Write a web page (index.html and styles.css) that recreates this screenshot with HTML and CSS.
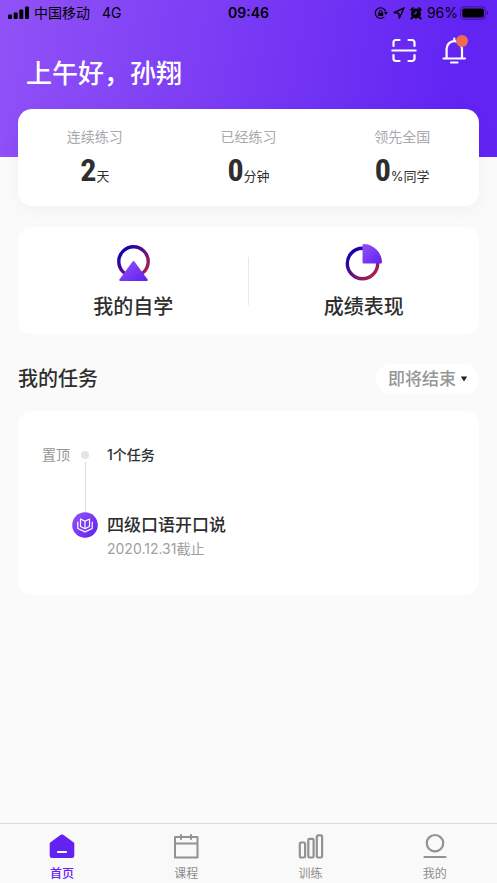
FILE: index.html
```html
<!DOCTYPE html>
<html lang="zh-CN">
<head>
<meta charset="utf-8">
<meta name="viewport" content="width=device-width, initial-scale=1">
<title>首页</title>
<link rel="stylesheet" href="styles.css">
</head>
<body>
<div class="app">
  <header class="hero">
    <div class="status">
      <div class="status-left">
        <svg width="22" height="14" viewBox="0 0 22 14" aria-hidden="true"><rect x="0" y="8.500" width="4" height="4.500" rx="1"/><rect x="5.700" y="6.500" width="4" height="6.500" rx="1"/><rect x="11.300" y="3.500" width="4" height="9.500" rx="1"/><rect x="17" y="0.500" width="4" height="12.500" rx="1"/></svg>
        <span>中国移动</span>
        <span class="network">4G</span>
      </div>
      <span class="time">09:46</span>
      <div class="status-right">
        <svg width="14" height="14" viewBox="0 0 14 14" aria-hidden="true"><path d="M10.300 10.900A5.300 5.300 0 1 1 11.700 5.500" fill="none" stroke="#000" stroke-width="1.200"/><path d="M9.900 6h4L11.900 9z"/><rect x="4.200" y="6.500" width="5" height="3.600" rx=".5"/><path d="M5.300 6.800V5.600a1.400 1.400 0 0 1 2.800 0v1.200" fill="none" stroke="#000"/></svg>
        <svg width="12" height="12" viewBox="0 0 12 12" aria-hidden="true"><path d="M11 1 1 5.600l4.700.7L6.400 11z" fill="none" stroke="#000" stroke-width="1.400" stroke-linejoin="round"/></svg>
        <svg width="12" height="14" viewBox="0 0 12 14" aria-hidden="true"><circle cx="6" cy="7.500" r="5"/><path d="M1.300 3.700 2.900 2.100M10.700 3.700 9.100 2.100M2.500 11.200 1.500 12.400M9.500 11.200l1 1.200" stroke="#000" stroke-width="2" stroke-linecap="round"/><path d="M6 4.800v3H3.800" fill="none" stroke="#7134f3"/></svg>
        <span class="charge">96%<svg width="29" height="14" viewBox="0 0 29 14" aria-hidden="true"><rect x=".6" y=".8" width="25" height="12.400" rx="3.500" fill="none" stroke="#000" stroke-opacity=".4"/><rect x="2.300" y="2.500" width="21.600" height="9" rx="2"/><path d="M27 5c1.600.6 1.600 3.400 0 4z" fill-opacity=".5"/></svg></span>
      </div>
    </div>
    <div class="topbar">
      <h1>上午好，孙翔</h1>
      <div class="actions">
        <button type="button" aria-label="扫一扫"><svg width="26" height="28" viewBox="0 0 26 28" fill="none" stroke="#fff" stroke-width="2.200" stroke-linecap="round"><path d="M2.500 10V6.500a2.500 2.500 0 0 1 2.500-2.500h3.500M17.500 4H21a2.500 2.500 0 0 1 2.500 2.500V10M2.500 19v3.500A2.500 2.500 0 0 0 5 25h3.500M17.500 25H21a2.500 2.500 0 0 0 2.500-2.500V19M1.300 14.500h23.400"/></svg></button>
        <button type="button" aria-label="消息"><svg width="26" height="28" viewBox="0 0 26 28" fill="none" stroke="#fff" stroke-width="2.200" stroke-linecap="round"><path d="M1.500 22.500h21.500M4.600 22V12.800a7.700 7.700 0 0 1 15.400 0V22M12.300 4.800V2.500M9 26.500h6.500"/></svg><span class="badge"></span></button>
      </div>
    </div>
  </header>

  <main>
    <dl class="card stats">
      <div><dt>连续练习</dt><dd><b>2</b>天</dd></div>
      <div><dt>已经练习</dt><dd><b>0</b>分钟</dd></div>
      <div><dt>领先全国</dt><dd><b>0</b>%同学</dd></div>
    </dl>

    <nav class="card shortcuts" aria-label="快捷入口">
      <a href="#study">
        <svg width="38" height="40" viewBox="0 0 38 40" aria-hidden="true">
          <defs>
            <linearGradient id="ring" x1="0" y1="0" x2="1" y2="1"><stop offset=".15" stop-color="#1402b0"/><stop offset=".9" stop-color="#b0204c"/></linearGradient>
            <linearGradient id="violet" x1="0" y1="0" x2="1" y2="1"><stop stop-color="#9354f8"/><stop offset="1" stop-color="#5f20ef"/></linearGradient>
          </defs>
          <circle cx="19.500" cy="18.500" r="14.700" fill="none" stroke="url(#ring)" stroke-width="3.400"/>
          <path d="M18.600 18.500q.9-1.200 1.800 0L33.600 36.500q.7 1.500-1 1.500H6.400q-1.700 0-1-1.500z" fill="url(#violet)"/>
        </svg>
        <span>我的自学</span>
      </a>
      <a href="#scores">
        <svg width="38" height="40" viewBox="0 0 38 40" aria-hidden="true">
          <circle cx="17.500" cy="20.500" r="15.200" fill="none" stroke="url(#ring)" stroke-width="3.400"/>
          <path d="M17.500 2.200q0-1.200 1.200-1.200C29 1.500 36.500 9.500 37 19q0 1.500-1.200 1.500H19q-1.500 0-1.500-1.500z" fill="url(#violet)"/>
        </svg>
        <span>成绩表现</span>
      </a>
    </nav>

    <div class="section-head">
      <h2>我的任务</h2>
      <div class="picker">
        <select aria-label="任务排序"><option>即将结束</option></select>
        <svg width="8" height="6" viewBox="0 0 8 6" aria-hidden="true"><path d="M.8.500h6.400L4 5.500z" fill="#222"/></svg>
      </div>
    </div>

    <section class="card tasks">
      <div class="task-row first">
        <span class="pin">置顶</span>
        <span class="rail"><i class="dot"></i><i class="line"></i></span>
        <h3>1个任务</h3>
      </div>
      <div class="task-row">
        <span></span>
        <svg width="26" height="26" viewBox="0 0 26 26" aria-hidden="true"><circle cx="13" cy="13" r="12.800" fill="url(#violet)"/><path d="M13 9.200 8.500 7v7.500l4.500 2.200 4.500-2.200V7zM13 9.200v7.300M5.800 10v6.500l7.200 3.400 7.200-3.400V10" fill="none" stroke="#fff" stroke-width="1.200" stroke-linejoin="round" stroke-linecap="round"/></svg>
        <a class="task" href="#task"><strong>四级口语开口说</strong><time datetime="2020-12-31">2020.12.31截止</time></a>
      </div>
    </section>
  </main>

  <nav class="tabs" aria-label="主导航">
    <a class="active" href="#home" aria-current="page">
      <svg width="26" height="26" viewBox="0 0 26 26" aria-hidden="true"><path d="M11.800 1.800q1.200-.8 2.400 0l10.300 7.500q.8.600.8 1.700V22.800q0 2.300-2.300 2.300H3q-2.300 0-2.300-2.300V11q0-1.100.8-1.700z" fill="#6322f2"/><path d="M9 19h8" stroke="#fff" stroke-width="2.200" stroke-linecap="round"/></svg>
      <span>首页</span>
    </a>
    <a href="#course">
      <svg width="26" height="26" viewBox="0 0 26 26" fill="none" stroke="#929292" stroke-width="2" stroke-linejoin="round" stroke-linecap="round" aria-hidden="true"><path d="M2 4h22.500V24.500H2zM2 10.500h22.500M8 2v4M18 2v4"/></svg>
      <span>课程</span>
    </a>
    <a href="#train">
      <svg width="26" height="26" viewBox="0 0 26 26" fill="none" stroke="#929292" stroke-width="2.200" aria-hidden="true"><rect x="1.800" y="9.500" width="5.300" height="15" rx="1.300"/><rect x="10.300" y="5.800" width="5.300" height="18.700" rx="1.300"/><rect x="18.800" y="2.300" width="5.300" height="22.200" rx="1.300"/></svg>
      <span>训练</span>
    </a>
    <a href="#me">
      <svg width="26" height="26" viewBox="0 0 26 26" fill="none" stroke="#929292" stroke-width="2.200" stroke-linecap="round" aria-hidden="true"><circle cx="13" cy="10.200" r="8.200"/><path d="M2.500 24h21"/></svg>
      <span>我的</span>
    </a>
  </nav>
</div>
</body>
</html>
```
FILE: styles.css
```css
* { box-sizing: border-box; }

body {
  margin: 0;
  background: #fafafa;
  color: #2e2e2e;
  font-family: Inter, "Noto Sans CJK SC", sans-serif;
  font-size: 14px;
  line-height: 20px;
}

h1, h2, h3, dl, dd { margin: 0; }
a { color: inherit; text-decoration: none; }
svg { display: block; flex: none; }

.app {
  min-height: 100vh;
  display: flex;
  flex-direction: column;
}

.hero {
  padding-bottom: 64px;
  background: linear-gradient(100deg, #9152f7 0%, #7a3bf4 45%, #6224f3 90%);
}

.status {
  display: grid;
  grid-template-columns: 1fr auto 1fr;
  align-items: center;
  height: 26px;
  padding: 0 8px;
  color: #000;
}
.status-left, .status-right, .charge { display: flex; align-items: center; gap: 4px; }
.status-right { justify-content: flex-end; gap: 5px; }
.status-right .charge { gap: 2px; }
.network { margin-left: 8px; }
.time { font-weight: 600; }

.topbar {
  display: flex;
  justify-content: space-between;
  align-items: flex-start;
  padding: 10px 29px 0 26px;
}
.topbar h1 {
  margin-top: 19px;
  color: #fff;
  font-size: 26px;
  line-height: 38px;
  font-weight: 500;
}
.actions { display: flex; gap: 25px; }
.actions button {
  position: relative;
  padding: 0;
  border: 0;
  background: none;
}
.badge {
  position: absolute;
  top: -1px;
  right: 0;
  width: 12px;
  height: 12px;
  border-radius: 50%;
  background: #ee6a50;
}

main { padding: 0 18px 20px; }
.card { border-radius: 14px; background: #fff; }

.stats {
  position: relative;
  display: grid;
  grid-template-columns: repeat(3, 1fr);
  margin-top: -48px;
  padding: 18px 0 13px;
  text-align: center;
  box-shadow: 0 4px 20px rgba(0, 0, 0, .04);
}
.stats dt { color: #a8a8ad; }
.stats dd {
  display: flex;
  justify-content: center;
  align-items: baseline;
  font-size: 13px;
}
.stats b {
  font-family: "Liberation Sans Narrow", "Roboto Condensed", "DejaVu Sans Condensed", sans-serif;
  font-size: 32px;
  line-height: 46px;
}

.shortcuts {
  display: grid;
  grid-template-columns: 1fr 1fr;
  margin-top: 21px;
  padding: 16px 0 12px;
}
.shortcuts a {
  display: flex;
  flex-direction: column;
  align-items: center;
  gap: 9px;
  font-size: 20px;
  line-height: 30px;
  font-weight: 500;
}
.shortcuts a:first-child {
  background: linear-gradient(#e8e8e8, #e8e8e8) right top 14px / 1px 48px no-repeat;
}

.section-head {
  display: flex;
  justify-content: space-between;
  align-items: center;
  margin: 30px 0 17px;
}
.section-head h2 { font-size: 20px; line-height: 30px; font-weight: 500; }

.picker {
  display: flex;
  align-items: center;
  height: 30px;
  padding-right: 11px;
  border-radius: 15px;
  background: #fff;
}
.picker select {
  appearance: none;
  height: 30px;
  margin-right: -8px;
  padding: 0 12px 0 12px;
  border: 0;
  background: none;
  color: #969696;
  font: inherit;
  font-size: 17px;
  font-weight: 500;
}
.picker svg { pointer-events: none; }

.tasks { padding: 34px 24px 35px; }
.task-row {
  display: grid;
  grid-template-columns: 28px 26px 1fr;
  column-gap: 2px;
}
.task-row.first { height: 67px; }
.pin { color: #969696; }
.rail { display: flex; flex-direction: column; align-items: center; }
.dot { width: 8px; height: 8px; margin: 6px 0 3px; border-radius: 50%; background: #e4e4e4; }
.line { width: 1px; flex: 1; background: #dedede; }
.tasks h3 { padding-left: 7px; font-size: 14px; font-weight: 500; }
.task { display: flex; flex-direction: column; padding-left: 7px; }
.task strong { font-size: 17px; line-height: 26px; font-weight: 500; }
.task time { color: #a0a0a0; line-height: 22px; }

.tabs {
  display: grid;
  grid-template-columns: repeat(4, 1fr);
  margin-top: auto;
  padding-top: 9px;
  border-top: 1px solid #dcdcdc;
  background: #f9f9f9;
  color: #8c8c8c;
  font-size: 12px;
  line-height: 18px;
}
.tabs a {
  display: flex;
  flex-direction: column;
  align-items: center;
  gap: 6px;
}
.tabs .active { color: #6322f2; font-weight: 500; }
```
